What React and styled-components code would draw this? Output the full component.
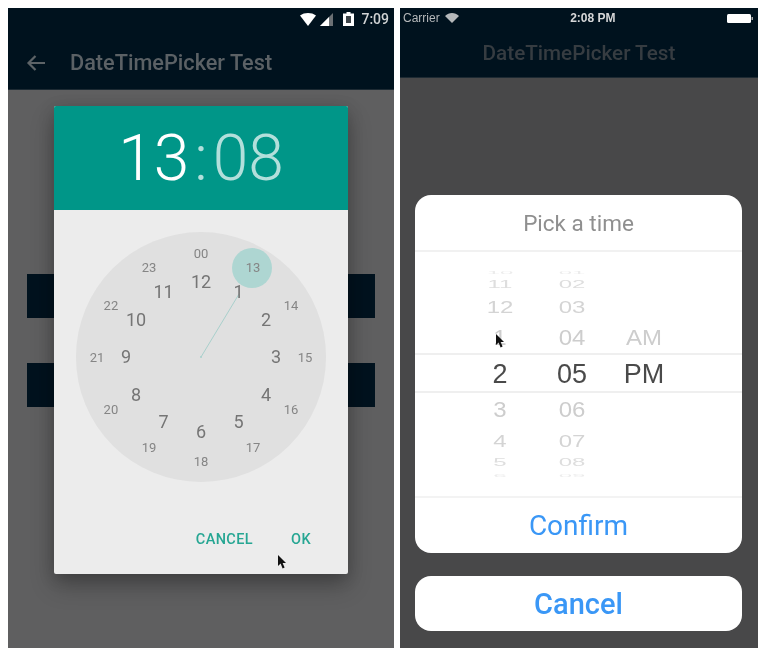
import React from "react";
import styled, { createGlobalStyle } from "styled-components";

const Global = createGlobalStyle`
  html, body { margin: 0; padding: 0; background: #fff; }
  #root { width: 768px; height: 660px; overflow: hidden; }
`;

const Page = styled.div`
  display: flex;
  gap: 6px;
  width: 768px;
  height: 660px;
  box-sizing: border-box;
  padding: 8px 10px 12px 8px;
  font-family: Roboto, "Liberation Sans", sans-serif;
`;

const Phone = styled.section`
  position: relative;
  display: flex;
  flex-direction: column;
  width: ${(p) => p.$w}px;
  height: 640px;
  overflow: hidden;
  background: ${(p) => p.$bg};
  filter: blur(0.7px);
`;

const Chrome = styled.header`
  display: flex;
  flex-direction: column;
  flex: none;
  height: ${(p) => p.$h}px;
  box-sizing: border-box;
  background: #00121e;
  border-bottom: 1px solid #1d2a33;
`;

const AndroidStatus = styled.div`
  display: flex;
  align-items: center;
  justify-content: flex-end;
  height: 22px;
  padding: 0 5px 0 0;
  color: #d0d3d4;
  font-size: 14px;
  font-weight: 500;
`;

const AndroidTime = styled.span`
  margin-left: 7px;
`;

const StatusIcon = styled.svg`
  display: block;
  flex: none;
  margin-left: ${(p) => p.$ml || 0}px;
`;

const AndroidBar = styled.div`
  display: flex;
  align-items: center;
  gap: 24px;
  height: 59px;
  padding: 6px 0 0 18px;
  box-sizing: border-box;
`;

const BarTitle = styled.h1`
  margin: 0;
  font-size: ${(p) => p.$size}px;
  font-weight: 500;
  color: ${(p) => p.$color};
  white-space: nowrap;
`;

const AndroidContent = styled.div`
  flex: 1;
  display: flex;
  flex-direction: column;
  gap: 45px;
  padding: 184px 19px 0;
`;

const HiddenButton = styled.div`
  height: 44px;
  background: #00121e;
`;

const Dialog = styled.div`
  position: absolute;
  left: 46px;
  top: 98px;
  width: 294px;
  height: 468px;
  display: flex;
  flex-direction: column;
  background: #ececec;
  border-radius: 2px;
  box-shadow: 0 12px 24px rgba(0, 0, 0, 0.24), 0 4px 16px rgba(0, 0, 0, 0.18);
`;

const DialogHeader = styled.div`
  flex: none;
  height: 104px;
  display: flex;
  align-items: center;
  justify-content: center;
  background: #009688;
  border-radius: 2px 2px 0 0;
  font-size: 64px;
  font-weight: 300;
  color: #b2dfdb;
`;

const Hours = styled.span`
  color: #fff;
`;

const Colon = styled.span`
  margin: 0 5px;
`;

const Clock = styled.div`
  position: relative;
  flex: none;
  width: 250px;
  height: 250px;
  margin: 22px auto 0;
  border-radius: 50%;
  background: #e0e0e0;
`;

const Selector = styled.div`
  position: absolute;
  left: 156px;
  top: 16px;
  width: 40px;
  height: 40px;
  border-radius: 50%;
  background: #aed6d2;
`;

const Hand = styled.svg`
  position: absolute;
  left: 0;
  top: 0;
`;

const Numeral = styled.span`
  position: absolute;
  transform: translate(-50%, -50%);
  font-size: ${(p) => (p.$outer ? 13 : 18)}px;
  color: ${(p) => (p.$outer ? "#858585" : "#757575")};
  line-height: 1;
`;

const DialogActions = styled.div`
  flex: 1;
  display: flex;
  justify-content: flex-end;
  align-items: flex-end;
  gap: 38px;
  padding: 0 37px 26px 0;
`;

const TextAction = styled.span`
  font-size: 14.5px;
  font-weight: 500;
  letter-spacing: 0.4px;
  color: #26a693;
`;

const IosStatus = styled.div`
  position: relative;
  display: flex;
  align-items: center;
  justify-content: space-between;
  height: 20px;
  padding: 0 5px 0 3px;
  font-family: "Liberation Sans", sans-serif;
  font-size: 12px;
  color: #b5b8ba;
`;

const Carrier = styled.div`
  display: flex;
  align-items: center;
  gap: 5px;
`;

const IosClock = styled.span`
  font-weight: 700;
  color: #d5d6d7;
`;

const IosBar = styled.div`
  flex: 1;
  display: flex;
  align-items: center;
  justify-content: center;
`;

const IosContent = styled.div`
  flex: 1;
  display: flex;
  flex-direction: column;
  justify-content: flex-end;
  gap: 23px;
  padding: 0 16px 17px 15px;
`;

const Sheet = styled.div`
  display: flex;
  flex-direction: column;
  background: #fff;
  border-radius: 16px;
  overflow: hidden;
`;

const SheetTitle = styled.div`
  height: 57px;
  display: flex;
  align-items: center;
  justify-content: center;
  font-size: 22.5px;
  color: #8f8f8f;
  border-bottom: 2px solid #f1f1f1;
  box-sizing: border-box;
`;

const Wheels = styled.div`
  position: relative;
  height: 244px;
  display: flex;
  align-items: center;
  padding-left: 54px;
  box-sizing: border-box;
  font-family: "Liberation Sans", sans-serif;
`;

const SelectionBand = styled.div`
  position: absolute;
  left: 0;
  right: 0;
  top: 101px;
  height: 40px;
  box-sizing: border-box;
  border-top: 2px solid #efefef;
  border-bottom: 2px solid #efefef;
`;

const Wheel = styled.div`
  flex: none;
  width: ${(p) => p.$w}px;
  display: flex;
  flex-direction: column;
  align-items: center;
`;

const WheelRow = styled.div`
  height: ${(p) => p.$h}px;
  line-height: ${(p) => p.$h}px;
  font-size: ${(p) => (p.$active ? 27 : 24)}px;
  color: ${(p) => (p.$active ? "#4a4a4a" : p.$tone)};
  transform: scaleY(${(p) => p.$sy});
  white-space: nowrap;
`;

const SheetAction = styled.div`
  display: flex;
  align-items: center;
  justify-content: center;
  height: ${(p) => p.$h}px;
  font-size: ${(p) => p.$size}px;
  font-weight: ${(p) => p.$weight};
  color: #3a97f6;
  box-sizing: border-box;
  border-top: ${(p) => (p.$rule ? "2px solid #f3f3f3" : "none")};
`;

const Pointer = styled.svg`
  position: absolute;
  left: ${(p) => p.$x}px;
  top: ${(p) => p.$y}px;
`;

const Cursor = ({ x, y }) => (
  <Pointer $x={x} $y={y} width="11" height="16" viewBox="0 0 11 16">
    <path d="M1 1 L1 12 L3.6 9.6 L5.6 14.5 L7.6 13.6 L5.6 9 L9 9 Z" fill="#111" />
  </Pointer>
);

const inner = [12, 1, 2, 3, 4, 5, 6, 7, 8, 9, 10, 11];
const outer = ["00", 13, 14, 15, 16, 17, 18, 19, 20, 21, 22, 23];
const place = (i, r) => {
  const a = (i * Math.PI) / 6;
  return { left: 125 + r * Math.sin(a), top: 125 - r * Math.cos(a) };
};

const rows = [
  [9, 0.16, "#ececec"],
  [16, 0.42, "#dedede"],
  [28, 0.72, "#d4d4d4"],
  [34, 0.9, "#cdcdcd"],
  [38, 1, "#4a4a4a"],
  [34, 0.9, "#cdcdcd"],
  [28, 0.72, "#d4d4d4"],
  [16, 0.42, "#dedede"],
  [9, 0.16, "#ececec"],
];

const hoursCol = ["10", "11", "12", "1", "2", "3", "4", "5", "6"];
const minutesCol = ["01", "02", "03", "04", "05", "06", "07", "08", "09"];
const ampm = ["", "", "", "AM", "PM", "", "", "", ""];

const WheelColumn = ({ items, w }) => (
  <Wheel $w={w}>
    {items.map((t, i) => (
      <WheelRow key={i} $h={rows[i][0]} $sy={rows[i][1]} $tone={rows[i][2]} $active={i === 4}>
        {t || "\u00a0"}
      </WheelRow>
    ))}
  </Wheel>
);

export default function App() {
  return (
    <>
      <Global />
      <Page>
        <Phone $w={386} $bg="#5f5f60">
          <Chrome $h={82}>
            <AndroidStatus>
              <StatusIcon width="16" height="13" viewBox="0 0 16 13">
                <path d="M0 2.5 C4.5 -0.8 11.5 -0.8 16 2.5 L8 13 Z" fill="#fff" />
              </StatusIcon>
              <StatusIcon $ml={4} width="14" height="13" viewBox="0 0 14 13">
                <path d="M13 0 V13 H0 Z" fill="#6b7074" />
                <path d="M9 5 V13 H0 L9 4 Z" fill="#fff" />
              </StatusIcon>
              <StatusIcon $ml={9} width="11" height="14" viewBox="0 0 11 14">
                <path d="M3.5 0 H7.5 V1.5 H11 V14 H0 V1.5 H3.5 Z" fill="#fff" />
                <rect x="3" y="4" width="5" height="7" fill="#3d4449" />
              </StatusIcon>
              <AndroidTime>7:09</AndroidTime>
            </AndroidStatus>
            <AndroidBar>
              <StatusIcon width="20" height="18" viewBox="0 0 20 18">
                <path d="M19 9 H3 M9.5 2 L2.5 9 L9.5 16" fill="none" stroke="#5d6367" strokeWidth="2.2" />
              </StatusIcon>
              <BarTitle $size={21.7} $color="#5b6165">DateTimePicker Test</BarTitle>
            </AndroidBar>
          </Chrome>
          <AndroidContent>
            <HiddenButton />
            <HiddenButton />
          </AndroidContent>
          <Dialog>
            <DialogHeader>
              <Hours>13</Hours>
              <Colon>:</Colon>
              <span>08</span>
            </DialogHeader>
            <Clock>
              <Selector />
              <Hand width="250" height="250" viewBox="0 0 250 250">
                <line x1="125" y1="125" x2="163" y2="62" stroke="#a9d0cc" strokeWidth="1" />
                <circle cx="125" cy="125" r="1" fill="#a9d0cc" />
              </Hand>
              {inner.map((n, i) => (
                <Numeral key={n} style={place(i, 75)}>{n}</Numeral>
              ))}
              {outer.map((n, i) => (
                <Numeral key={n} $outer style={place(i, 104)}>{n}</Numeral>
              ))}
            </Clock>
            <DialogActions>
              <TextAction>CANCEL</TextAction>
              <TextAction>OK</TextAction>
            </DialogActions>
          </Dialog>
          <Cursor x={269} y={546} />
        </Phone>
        <Phone $w={358} $bg="#484849">
          <Chrome $h={70}>
            <IosStatus>
              <Carrier>
                Carrier
                <StatusIcon width="14" height="10" viewBox="0 0 14 10">
                  <path d="M0 3 C4 -1 10 -1 14 3 L7 10 Z" fill="#b5b8ba" />
                </StatusIcon>
              </Carrier>
              <IosClock>2:08 PM</IosClock>
              <StatusIcon width="26" height="9" viewBox="0 0 26 9">
                <rect x="0" y="0" width="24" height="9" rx="1.5" fill="#fff" />
                <rect x="24.5" y="3" width="1.5" height="3" fill="#aaa" />
              </StatusIcon>
            </IosStatus>
            <IosBar>
              <BarTitle $size={20.7} $color="#363c41">DateTimePicker Test</BarTitle>
            </IosBar>
          </Chrome>
          <IosContent>
            <Sheet>
              <SheetTitle>Pick a time</SheetTitle>
              <Wheels>
                <SelectionBand />
                <WheelColumn items={hoursCol} w={62} />
                <WheelColumn items={minutesCol} w={82} />
                <WheelColumn items={ampm} w={62} />
              </Wheels>
              <SheetAction $h={57} $size={28} $weight={400} $rule>Confirm</SheetAction>
            </Sheet>
            <Sheet>
              <SheetAction $h={55} $size={29} $weight={500}>Cancel</SheetAction>
            </Sheet>
          </IosContent>
          <Cursor x={95} y={325} />
        </Phone>
      </Page>
    </>
  );
}
